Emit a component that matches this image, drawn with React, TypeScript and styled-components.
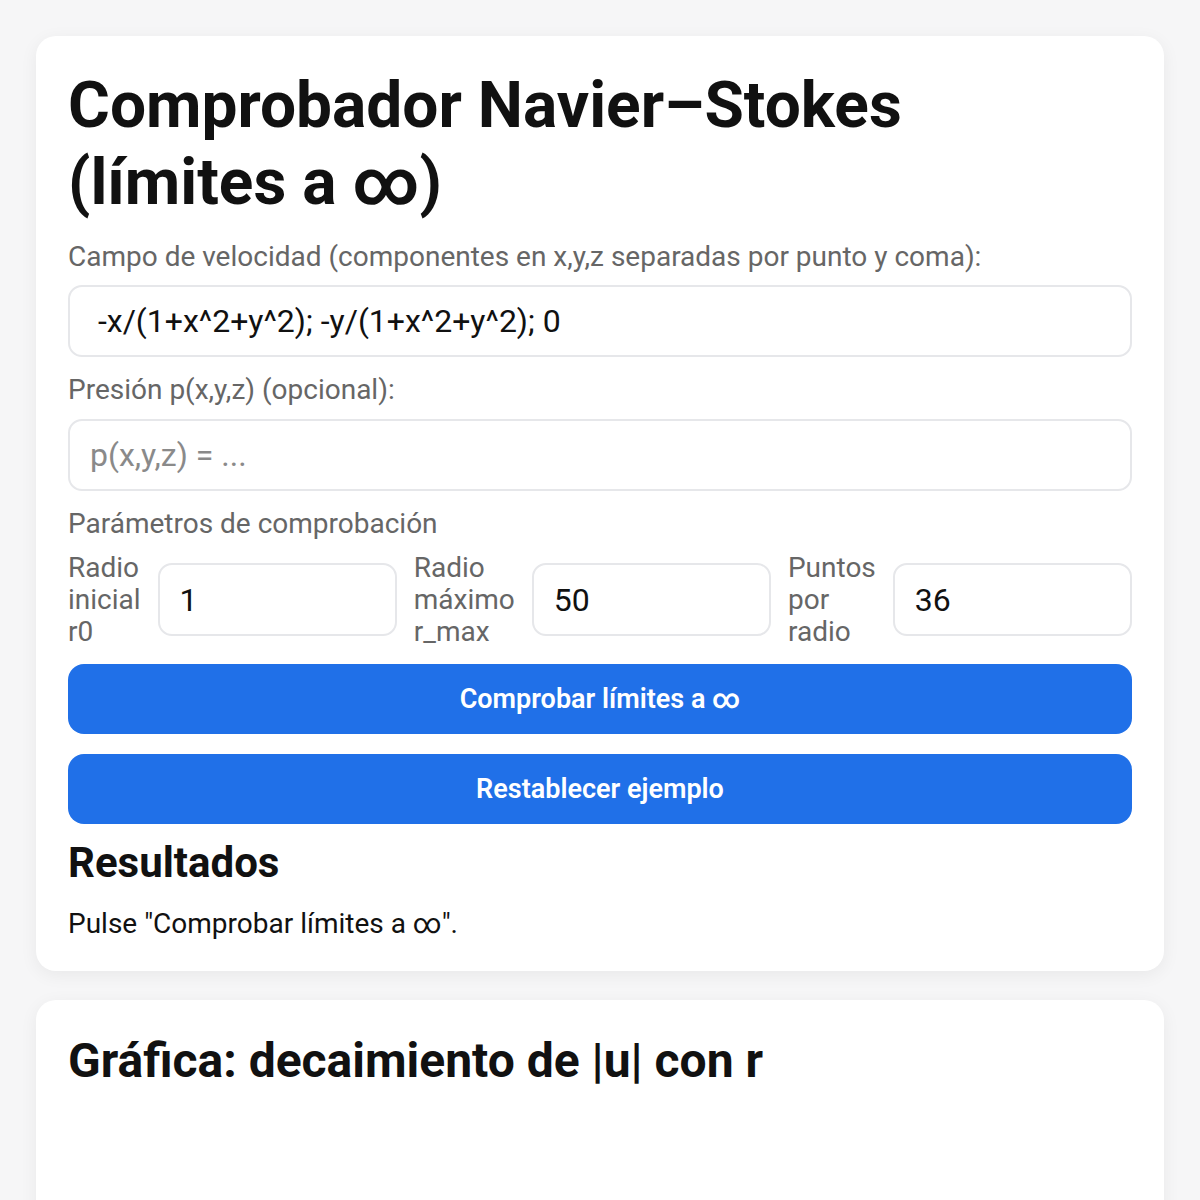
import React, { useState } from 'react'
import styled, { createGlobalStyle } from 'styled-components'

const GlobalStyle = createGlobalStyle`
  body {
    margin: 0;
    background: #f6f6f7;
    font-family: Roboto, "Liberation Sans", Arial, sans-serif;
    color: #111;
  }
`

const Page = styled.main`
  padding: 36px;
  display: flex;
  flex-direction: column;
  gap: 29px;
`

const Card = styled.section`
  background: #fff;
  border-radius: 20px;
  box-shadow: 0 4px 18px rgba(0, 0, 0, 0.06);
  padding: 32px 32px 31px;
  display: flex;
  flex-direction: column;
`

const Title = styled.h1`
  margin: 0 0 19px;
  font-size: 64px;
  line-height: 1.2;
  font-weight: 700;
  color: #111;
`

const SubTitle = styled.h2<{ $size?: number; $bottom?: number }>`
  margin: 0 0 ${p => p.$bottom ?? 0}px;
  font-size: ${p => p.$size ?? 42}px;
  line-height: 1.2;
  font-weight: 700;
  color: #111;
`

const Label = styled.label<{ $gap?: number }>`
  display: block;
  font-size: 28px;
  line-height: 32px;
  color: #666;
  margin-bottom: ${p => p.$gap ?? 12}px;
`

const TextInput = styled.input`
  box-sizing: border-box;
  width: 100%;
  height: 72px;
  padding: 0 20px;
  border: 2px solid #e6e7ea;
  border-radius: 14px;
  font-family: inherit;
  font-size: 32px;
  color: #111;
  background: #fff;
  outline: none;
  margin-bottom: 17px;
  &::placeholder {
    color: #8a8a8a;
  }
`

const ParamRow = styled.div`
  display: flex;
  align-items: center;
  gap: 17px;
  margin-bottom: 16px;
`

const ParamLabel = styled.label`
  width: min-content;
  font-size: 28px;
  line-height: 32px;
  color: #666;
`

const NumInput = styled(TextInput)`
  flex: 1;
  min-width: 0;
  height: 73px;
  margin-bottom: 0;
`

const Button = styled.button`
  height: 70px;
  width: 100%;
  border: none;
  border-radius: 16px;
  background: #2070e8;
  color: #fff;
  font-family: inherit;
  font-size: 27px;
  font-weight: 600;
  cursor: pointer;
  margin-bottom: 20px;
  &:last-of-type {
    margin-bottom: 14px;
  }
`

const ResultText = styled.p`
  margin: 0;
  font-size: 28px;
  line-height: 32px;
  color: #111;
`

const ChartArea = styled.div`
  height: 360px;
`

const DEFAULT_FIELD = ' -x/(1+x^2+y^2); -y/(1+x^2+y^2); 0'

const App = () => {
  const [field, setField] = useState<string>(DEFAULT_FIELD)
  const [pressure, setPressure] = useState<string>('')
  const [r0, setR0] = useState<string>('1')
  const [rMax, setRMax] = useState<string>('50')
  const [points, setPoints] = useState<string>('36')

  const reset = (): void => {
    setField(DEFAULT_FIELD)
    setPressure('')
    setR0('1')
    setRMax('50')
    setPoints('36')
  }

  return (
    <>
      <GlobalStyle />
      <Page>
        <Card>
          <Title>Comprobador Navier–Stokes (límites a ∞)</Title>
          <Label htmlFor="field">Campo de velocidad (componentes en x,y,z separadas por punto y coma):</Label>
          <TextInput id="field" value={field} onChange={e => setField(e.target.value)} />
          <Label htmlFor="pressure" $gap={13}>Presión p(x,y,z) (opcional):</Label>
          <TextInput
            id="pressure"
            placeholder="p(x,y,z) = ..."
            value={pressure}
            onChange={e => setPressure(e.target.value)}
          />
          <Label>Parámetros de comprobación</Label>
          <ParamRow>
            <ParamLabel htmlFor="r0">Radio inicial r0</ParamLabel>
            <NumInput id="r0" value={r0} onChange={e => setR0(e.target.value)} />
            <ParamLabel htmlFor="rmax">Radio máximo r_max</ParamLabel>
            <NumInput id="rmax" value={rMax} onChange={e => setRMax(e.target.value)} />
            <ParamLabel htmlFor="pts">Puntos por radio</ParamLabel>
            <NumInput id="pts" value={points} onChange={e => setPoints(e.target.value)} />
          </ParamRow>
          <Button>Comprobar límites a ∞</Button>
          <Button onClick={reset}>Restablecer ejemplo</Button>
          <SubTitle $bottom={20}>Resultados</SubTitle>
          <ResultText>Pulse "Comprobar límites a ∞".</ResultText>
        </Card>
        <Card>
          <SubTitle $size={48}>Gráfica: decaimiento de |u| con r</SubTitle>
          <ChartArea />
        </Card>
      </Page>
    </>
  )
}

export default App
